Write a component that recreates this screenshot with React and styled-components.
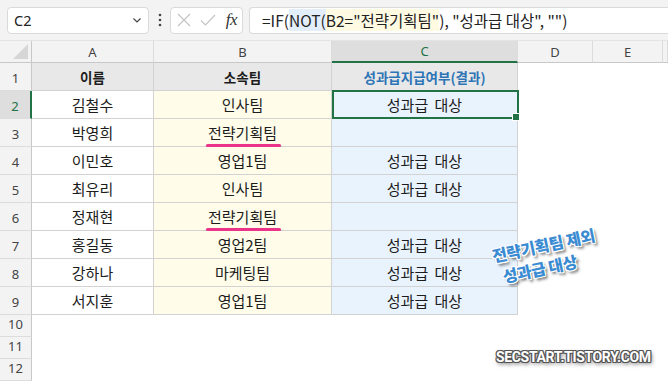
import React from 'react';
import styled, { createGlobalStyle, css } from 'styled-components';

const Global = createGlobalStyle`
  html, body { margin: 0; padding: 0; background: #fff; }
  body { font-family: "Noto Sans CJK KR", "Noto Sans", sans-serif; }
  * { box-sizing: border-box; }
`;

const Page = styled.div`
  position: relative;
  width: 668px;
  height: 382px;
  overflow: hidden;
  background: #fff;
`;

const Toolbar = styled.div`
  display: flex;
  align-items: center;
  height: 40px;
  padding-left: 7px;
  background: #f3f3f3;
`;

const Box = styled.div`
  height: 27px;
  background: #fff;
  border: 1px solid #dadada;
  display: flex;
  align-items: center;
`;

const NameBox = styled(Box)`
  width: 142px;
  border-radius: 4px;
  justify-content: space-between;
  padding: 0 5px 0 6px;
  font-family: "Noto Sans", sans-serif;
  font-size: 14.5px;
  color: #222;
`;

const Dots = styled.div`
  width: 21px;
  display: flex;
  justify-content: center;
`;

const FxBox = styled(Box)`
  width: 73px;
  border-radius: 4px;
  justify-content: space-between;
  padding: 0 5px 0 6px;
`;

const Fx = styled.span`
  font-family: "Liberation Serif", serif;
  font-style: italic;
  font-size: 17px;
  color: #333;
  letter-spacing: -0.5px;
`;

const Formula = styled(Box)`
  flex: 1;
  margin-left: 6px;
  border-radius: 4px 0 0 4px;
  border-right: none;
  padding-left: 12px;
  font-size: 15.5px;
  color: #222;
  white-space: pre;
`;

const Hl = styled.span`
  background: ${p => p.$c};
`;

const Sheet = styled.div`
  display: grid;
  grid-template-columns: 32px 122px 178px 186px 75px 70px 1fr;
  grid-template-rows: 22px repeat(9, 28px) repeat(3, 22px);
  border-top: 1px solid #e4e4e4;
`;

const Corner = styled.div`
  position: relative;
  background: #f3f3f3;
  border-right: 1px solid #c8c8c8;
  border-bottom: 1px solid #c8c8c8;
  &::after {
    content: '';
    position: absolute;
    right: 3px;
    bottom: 3px;
    width: 15px;
    height: 15px;
    background: #d6d6d6;
    clip-path: polygon(100% 0, 100% 100%, 0 100%);
  }
`;

const ColHead = styled.div`
  display: flex;
  align-items: center;
  justify-content: center;
  background: #f3f3f3;
  border-right: 1px solid #dcdcdc;
  border-bottom: 1px solid #c8c8c8;
  font-family: "Noto Sans", sans-serif;
  font-size: 13px;
  color: #444;
  ${p => p.$active && css`
    background: #dedede;
    color: #217346;
    border-bottom: 2px solid #217346;
  `}
`;

const RowHead = styled.div`
  display: flex;
  align-items: flex-end;
  justify-content: center;
  padding-bottom: 3px;
  background: #f3f3f3;
  border-right: 1px solid #c8c8c8;
  border-bottom: 1px solid #dcdcdc;
  font-family: "Noto Sans", sans-serif;
  font-size: 13px;
  line-height: 17px;
  color: #444;
  ${p => p.$active && css`
    background: #dedede;
    color: #217346;
    border-right: 2px solid #217346;
  `}
`;

const fills = {
  head: '#e8e8e8',
  plain: '#ffffff',
  yellow: '#fffdea',
  blue: '#e9f3fd',
  empty: '#ffffff',
};

const Cell = styled.div`
  position: relative;
  display: flex;
  align-items: center;
  justify-content: center;
  background: ${p => fills[p.$kind]};
  border-right: 1px solid ${p => (p.$kind === 'empty' ? 'transparent' : '#d2d2d2')};
  border-bottom: 1px solid ${p => (p.$kind === 'empty' ? 'transparent' : '#d2d2d2')};
  font-size: ${p => (p.$kind === 'head' ? '13.5px' : '15px')};
  font-weight: ${p => (p.$kind === 'head' ? 700 : 400)};
  word-spacing: 3px;
  color: ${p => (p.$blueText ? '#2e75b6' : '#1c1c1c')};
  ${p => p.$selected && css`
    &::after {
      content: '';
      position: absolute;
      top: -1px;
      left: 0;
      right: -2px;
      bottom: -1px;
      border: 2px solid #217346;
      z-index: 2;
    }
    &::before {
      content: '';
      position: absolute;
      right: -3px;
      bottom: -3px;
      width: 6px;
      height: 6px;
      background: #217346;
      border: 1px solid #fff;
      z-index: 3;
    }
  `}
`;

const Marked = styled.span`
  position: relative;
  display: inline-block;
  line-height: 20px;
  &::after {
    content: '';
    position: absolute;
    left: -2px;
    right: -4px;
    bottom: -4px;
    height: 3px;
    border-radius: 2px;
    background: #ea3389;
    box-shadow: 0 2px 3px rgba(0, 0, 0, 0.3);
  }
`;

const Note = styled.div`
  position: absolute;
  left: 490px;
  top: 245px;
  transform-origin: 0 0;
  transform: rotate(-12deg);
  font-size: 16px;
  font-weight: 900;
  line-height: 22px;
  white-space: nowrap;
  color: #3a8bd2;
  letter-spacing: -0.3px;
  text-shadow:
    1px 0 0 #fff, -1px 0 0 #fff, 0 1px 0 #fff, 0 -1px 0 #fff,
    1px 1px 0 #fff, -1px -1px 0 #fff, 1px -1px 0 #fff, -1px 1px 0 #fff,
    2px 3px 3px rgba(0, 0, 0, 0.6);
`;

const NoteLine = styled.div`
  padding-left: ${p => p.$indent || 0}px;
`;

const Watermark = styled.div`
  position: absolute;
  left: 496px;
  top: 349px;
  font-family: "Roboto", "Noto Sans", sans-serif;
  font-weight: 700;
  font-size: 14px;
  letter-spacing: -0.35px;
  color: #fff;
  text-shadow:
    1px 0 0 #555, -1px 0 0 #555, 0 1px 0 #555, 0 -1px 0 #555,
    1px 1px 0 #555, -1px -1px 0 #555, 1px -1px 0 #555, -1px 1px 0 #555,
    1px 2px 4px rgba(0, 0, 0, 0.7);
`;

const rows = [
  ['이름', '소속팀', '성과급지급여부(결과)'],
  ['김철수', '인사팀', '성과급 대상'],
  ['박영희', '전략기획팀', ''],
  ['이민호', '영업1팀', '성과급 대상'],
  ['최유리', '인사팀', '성과급 대상'],
  ['정재현', '전략기획팀', ''],
  ['홍길동', '영업2팀', '성과급 대상'],
  ['강하나', '마케팅팀', '성과급 대상'],
  ['서지훈', '영업1팀', '성과급 대상'],
];

const cols = ['A', 'B', 'C', 'D', 'E', ''];

export default function App() {
  return (
    <Page>
      <Global />
      <Toolbar>
        <NameBox>
          <span>C2</span>
          <svg width="12" height="12" viewBox="0 0 12 12">
            <path d="M2.5 4.5 L6 8 L9.5 4.5" fill="none" stroke="#444" strokeWidth="1.2" />
          </svg>
        </NameBox>
        <Dots>
          <svg width="4" height="14" viewBox="0 0 4 14">
            <circle cx="2" cy="2" r="1.3" fill="#444" />
            <circle cx="2" cy="7" r="1.3" fill="#444" />
            <circle cx="2" cy="12" r="1.3" fill="#444" />
          </svg>
        </Dots>
        <FxBox>
          <svg width="14" height="14" viewBox="0 0 14 14">
            <path d="M1 1 L13 13 M13 1 L1 13" stroke="#c4c4c4" strokeWidth="1.2" />
          </svg>
          <svg width="16" height="14" viewBox="0 0 16 14">
            <path d="M1 7.5 L5.5 12 L15 2" fill="none" stroke="#c4c4c4" strokeWidth="1.2" />
          </svg>
          <Fx>fx</Fx>
        </FxBox>
        <Formula>
          =IF(<Hl $c="#e2effb">NOT(</Hl><Hl $c="#fffbe2">B2="전략기획팀"</Hl>), "성과급 대상", "")
        </Formula>
      </Toolbar>
      <Sheet>
        <Corner />
        {cols.map((c, i) => (
          <ColHead key={i} $active={c === 'C'}>{c}</ColHead>
        ))}
        {Array.from({ length: 12 }).map((_, r) => {
          const data = rows[r];
          return (
            <React.Fragment key={r}>
              <RowHead $active={r === 1}>{r + 1}</RowHead>
              {data ? (
                <>
                  <Cell $kind={r === 0 ? 'head' : 'plain'}>{data[0]}</Cell>
                  <Cell $kind={r === 0 ? 'head' : 'yellow'}>
                    {data[1] === '전략기획팀' ? <Marked>{data[1]}</Marked> : data[1]}
                  </Cell>
                  <Cell $kind={r === 0 ? 'head' : 'blue'} $blueText={r === 0} $selected={r === 1}>
                    {data[2]}
                  </Cell>
                </>
              ) : (
                <>
                  <Cell $kind="empty" />
                  <Cell $kind="empty" />
                  <Cell $kind="empty" />
                </>
              )}
              <Cell $kind="empty" />
              <Cell $kind="empty" />
              <Cell $kind="empty" />
            </React.Fragment>
          );
        })}
      </Sheet>
      <Note>
        <NoteLine>전략기획팀 제외</NoteLine>
        <NoteLine $indent={6}>성과급 대상</NoteLine>
      </Note>
      <Watermark>SECSTART.TISTORY.COM</Watermark>
    </Page>
  );
}
